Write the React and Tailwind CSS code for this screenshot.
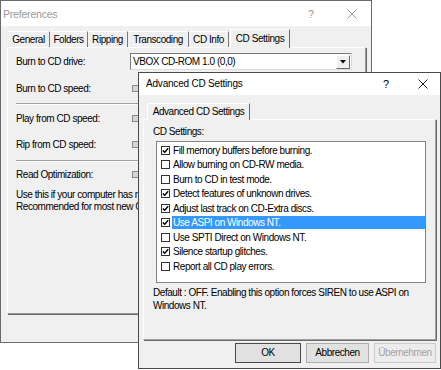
import React from 'react';

const items = [
  { label: 'Fill memory buffers before burning.', checked: true },
  { label: 'Allow burning on CD-RW media.', checked: false },
  { label: 'Burn to CD in test mode.', checked: false },
  { label: 'Detect features of unknown drives.', checked: true },
  { label: 'Adjust last track on CD-Extra discs.', checked: true },
  { label: 'Use ASPI on Windows NT.', checked: true, selected: true },
  { label: 'Use SPTI Direct on Windows NT.', checked: false },
  { label: 'Silence startup glitches.', checked: true },
  { label: 'Report all CD play errors.', checked: false },
];

const backTabs = [
  { label: 'General', w: 'w-[42px]' },
  { label: 'Folders', w: 'w-[38px]' },
  { label: 'Ripping', w: 'w-[40px]' },
  { label: 'Transcoding', w: 'w-[61px]' },
  { label: 'CD Info', w: 'w-[40px]' },
];

function CloseGlyph({ color }) {
  return (
    <svg width="10" height="10" viewBox="0 0 10 10">
      <path d="M0.5 0.5 L9.5 9.5 M9.5 0.5 L0.5 9.5" stroke={color} strokeWidth="1" fill="none" />
    </svg>
  );
}

function CheckBox({ checked }) {
  return (
    <div className="w-[9px] h-[9px] border border-[#333] bg-white flex-shrink-0 flex items-center justify-center">
      {checked && (
        <svg width="7" height="7" viewBox="0 0 7 7">
          <path d="M0.8 3.4 L2.7 5.3 L6.2 1.2" stroke="#000" strokeWidth="1.4" fill="none" />
        </svg>
      )}
    </div>
  );
}

function SpinStub() {
  return <div className="w-[7px] h-[7px] border border-[#8a8a8a] bg-[#d6d6d6] ml-[2px]" />;
}

export default function App() {
  return (
    <div className="relative w-[441px] h-[370px] overflow-hidden bg-white text-black text-[10px] leading-[12px] tracking-[-0.45px] font-[family-name:'Liberation_Sans',Arial,sans-serif]">
      {/* Preferences window (inactive, behind) */}
      <div className="absolute left-0 top-0 w-[372px] h-[343px] border border-[#6a6a6a] bg-[#f0f0f0] flex flex-col">
        <div className="h-[25px] bg-white flex items-center pl-[2px] pr-[14px] text-[10.5px] tracking-[-0.2px] text-[#999]">
          <span className="flex-1">Preferences</span>
          <span className="mr-[33px] text-[11px]">?</span>
          <CloseGlyph color="#9a9a9a" />
        </div>

        {/* tabs */}
        <div className="h-[21px] flex items-end pl-[7px]">
          {backTabs.map((t) => (
            <div
              key={t.label}
              className={`${t.w} h-[16px] border-t border-t-white border-r border-r-[#7a7a7a] flex items-center justify-center`}
            >
              {t.label}
            </div>
          ))}
          <div className="w-[60px] h-[19px] -mb-px ml-[1px] bg-[#f0f0f0] border-t border-l border-t-white border-l-white border-r border-r-[#6a6a6a] flex items-center justify-center relative z-10">
            CD Settings
          </div>
        </div>

        {/* panel */}
        <div className="ml-[6px] mr-[5px] h-[267px] border border-t-white border-l-white border-r-[#9a9a9a] border-b-[#9a9a9a] shadow-[1px_1px_0_#6a6a6a] pl-[8px] pt-[5px]">
          <div className="h-[17px] flex items-center">
            <span className="w-[114px]">Burn to CD drive:</span>
            <div className="w-[222px] h-[17px] border border-[#7a7a7a] border-r-[#dcdcdc] border-b-[#dcdcdc] bg-white flex items-center pl-[2px]">
              <span className="flex-1">VBOX CD-ROM 1.0 (0,0)</span>
              <div className="w-[14px] h-[14px] mr-px bg-[#f0f0f0] border border-t-white border-l-white border-r-[#6a6a6a] border-b-[#6a6a6a] flex items-center justify-center">
                <svg width="6" height="4" viewBox="0 0 6 4">
                  <path d="M0 0 L6 0 L3 3.5 Z" fill="#000" />
                </svg>
              </div>
            </div>
          </div>
          <div className="h-[17px] mt-[10px] flex items-center">
            <span className="w-[114px]">Burn to CD speed:</span>
            <SpinStub />
          </div>
          <div className="mt-[6px] mr-[8px] border-t border-t-[#a0a0a0] border-b border-b-white" />
          <div className="h-[17px] mt-[5px] flex items-center">
            <span className="w-[114px]">Play from CD speed:</span>
            <SpinStub />
          </div>
          <div className="h-[17px] mt-[9px] flex items-center">
            <span className="w-[114px]">Rip from CD speed:</span>
            <SpinStub />
          </div>
          <div className="mt-[7px] mr-[8px] border-t border-t-[#a0a0a0] border-b border-b-white" />
          <div className="h-[17px] mt-[4px] flex items-center">
            <span className="w-[114px]">Read Optimization:</span>
            <SpinStub />
          </div>
          {/* the rest of this text lies under the front window */}
          <div className="mt-[6px] w-[122px] overflow-hidden leading-[12px] whitespace-nowrap">
            Use this if your computer has no problems reading audio CDs.
            <br />
            Recommended for most new CD-ROM drives.
          </div>
        </div>
      </div>

      {/* Advanced CD Settings window (active, front) */}
      <div className="absolute left-[138px] top-[72px] w-[303px] h-[297px] border border-[#4a4a4a] bg-[#f0f0f0] flex flex-col">
        <div className="h-[22px] bg-white flex items-center pl-[7px] pr-[12px]">
          <span className="flex-1 tracking-[-0.2px]">Advanced CD Settings</span>
          <span className="mr-[29px] text-[11px] tracking-normal">?</span>
          <CloseGlyph color="#222" />
        </div>

        <div className="pt-[8px] pl-[8px] flex">
          <div className="w-[103px] h-[17px] -mb-px bg-[#f0f0f0] border-t border-l border-t-white border-l-white border-r border-r-[#6a6a6a] flex items-center justify-center relative z-10">
            Advanced CD Settings
          </div>
        </div>

        <div className="ml-[4px] mr-[4px] h-[221px] border border-t-white border-l-white border-r-[#a0a0a0] border-b-[#a0a0a0] shadow-[1px_1px_0_#6a6a6a] pt-[6px]">
          <div className="pl-[9px] leading-[12px]">CD Settings:</div>
          <div className="mt-[3px] ml-[12px] mr-[9px] h-[142px] border border-[#828282] bg-white pt-px pl-[4px]">
            {items.map((it) => (
              <div key={it.label} className="h-[14.5px] flex items-center">
                <CheckBox checked={it.checked} />
                <div
                  className={`ml-[2px] flex-1 h-[13px] pl-px flex items-center leading-[11px] ${
                    it.selected ? 'bg-[#3399ff] text-white' : ''
                  }`}
                >
                  {it.label}
                </div>
              </div>
            ))}
          </div>
          <div className="mt-[3px] pl-[9px] leading-[13px]">
            Default : OFF. Enabling this option forces SIREN to use ASPI on
            <br />
            Windows NT.
          </div>
        </div>

        <div className="mt-[3px] pr-[4px] flex justify-end gap-[5px]">
          <button className="w-[66px] h-[20px] bg-[#e1e1e1] border border-[#4a4a4a] flex items-center justify-center">
            OK
          </button>
          <button className="w-[63px] h-[20px] bg-[#e1e1e1] border border-[#adadad] flex items-center justify-center">
            Abbrechen
          </button>
          <button className="w-[62px] h-[20px] bg-[#ececec] border border-[#cacaca] text-[#a3a3a3] flex items-center justify-center">
            Übernehmen
          </button>
        </div>
      </div>
    </div>
  );
}
